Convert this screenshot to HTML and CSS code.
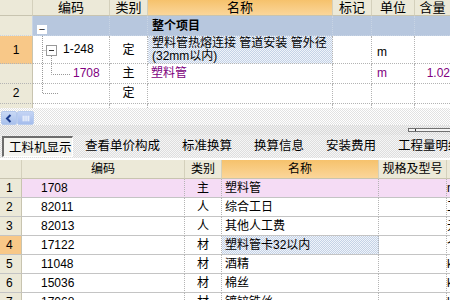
FILE: index.html
```html
<!DOCTYPE html>
<html>
<head>
<meta charset="utf-8">
<link rel="stylesheet" href="styles.css">
</head>
<body>
<div class="page">
  <div class="grid-top">
    <div class="trow thead">
      <div class="c rn"></div>
      <div class="c ctr">编码</div>
      <div class="c ctr">类别</div>
      <div class="c ctr orange">名称</div>
      <div class="c ctr">标记</div>
      <div class="c ctr">单位</div>
      <div class="c ctr">含量</div>
    </div>
    <div class="trow proj">
      <div class="c rn"></div>
      <div class="c code"><span class="rootbox">−</span></div>
      <div class="c"></div>
      <div class="c bold">整个项目</div>
      <div class="c"></div>
      <div class="c"></div>
      <div class="c"></div>
    </div>
    <div class="trow r1">
      <div class="c rn sel">1</div>
      <div class="c code">
        <svg class="tree" width="77" height="28" viewBox="0 0 77 28"><path d="M9.5 0V28M9.5 14.5H13M18.5 20V28" stroke="#999" stroke-dasharray="1 1" fill="none"/><rect x="13.5" y="9.5" width="10" height="10" fill="#fff" stroke="#999"/><path d="M16 14.5H21" stroke="#333"/></svg>
        <span class="codetxt">1-248</span>
      </div>
      <div class="c ctr">定</div>
      <div class="c name2 dither-blue">塑料管热熔连接 管道安装 管外径<br>(32mm以内)</div>
      <div class="c"></div>
      <div class="c unit low">m</div>
      <div class="c"></div>
    </div>
    <div class="trow r2">
      <div class="c rn"></div>
      <div class="c code">
        <svg class="tree" width="77" height="20" viewBox="0 0 77 20"><path d="M9.5 0V20M18.5 0V10.5H37" stroke="#999" stroke-dasharray="1 1" fill="none"/></svg>
        <span class="codetxt purple sub">1708</span>
      </div>
      <div class="c ctr">主</div>
      <div class="c purple">塑料管</div>
      <div class="c"></div>
      <div class="c unit purple">m</div>
      <div class="c num purple">1.02</div>
    </div>
    <div class="trow r2">
      <div class="c rn">2</div>
      <div class="c code">
        <svg class="tree" width="77" height="20" viewBox="0 0 77 20"><path d="M9.5 0V9.5H25" stroke="#999" stroke-dasharray="1 1" fill="none"/></svg>
      </div>
      <div class="c ctr">定</div>
      <div class="c"></div>
      <div class="c"></div>
      <div class="c"></div>
      <div class="c"></div>
    </div>
    <div class="trow rcut">
      <div class="c rn"></div>
      <div class="c"></div>
      <div class="c ctr cuttext">定</div>
      <div class="c"></div>
      <div class="c"></div>
      <div class="c"></div>
      <div class="c"></div>
    </div>
  </div>
  <div class="hscroll">
    <div class="sbtn">
      <svg width="14" height="13" viewBox="0 0 14 13"><path d="M8.5 3L5 6.5L8.5 10" stroke="#1c3c8c" stroke-width="2" fill="none"/></svg>
    </div>
    <div class="sthumb">
      <svg width="16" height="13" viewBox="0 0 16 13"><path d="M5.5 3.5V9.5M7.5 3.5V9.5M9.5 3.5V9.5M11.5 3.5V9.5" stroke="#fff" stroke-width="1"/></svg>
    </div>
    <div class="strack"></div>
  </div>
  <div class="midband">
    <div class="minibox"><span class="minidot"></span></div>
  </div>
  <div class="tabs">
    <div class="tab active">工料机显示</div>
    <div class="sep"></div>
    <div class="tab">查看单价构成</div>
    <div class="sep"></div>
    <div class="tab">标准换算</div>
    <div class="sep"></div>
    <div class="tab">换算信息</div>
    <div class="sep"></div>
    <div class="tab">安装费用</div>
    <div class="sep"></div>
    <div class="tab">工程量明细</div>
  </div>
  <div class="grid-bot">
    <div class="brow bhead">
      <div class="c brn"></div>
      <div class="c ctr">编码</div>
      <div class="c ctr">类别</div>
      <div class="c ctr orange">名称</div>
      <div class="c ctr">规格及型号</div>
      <div class="c"></div>
    </div>
    <div class="brow pink">
      <div class="c brn">1</div>
      <div class="c bcode">1708</div>
      <div class="c ctr">主</div>
      <div class="c bname">塑料管</div>
      <div class="c"></div>
      <div class="c last">m</div>
    </div>
    <div class="brow">
      <div class="c brn">2</div>
      <div class="c bcode">82011</div>
      <div class="c ctr">人</div>
      <div class="c bname">综合工日</div>
      <div class="c"></div>
      <div class="c last">工</div>
    </div>
    <div class="brow">
      <div class="c brn">3</div>
      <div class="c bcode">82013</div>
      <div class="c ctr">人</div>
      <div class="c bname">其他人工费</div>
      <div class="c"></div>
      <div class="c last">元</div>
    </div>
    <div class="brow">
      <div class="c brn sel">4</div>
      <div class="c bcode">17122</div>
      <div class="c ctr">材</div>
      <div class="c bname dither-blue">塑料管卡32以内</div>
      <div class="c"></div>
      <div class="c last">个</div>
    </div>
    <div class="brow">
      <div class="c brn">5</div>
      <div class="c bcode">11048</div>
      <div class="c ctr">材</div>
      <div class="c bname">酒精</div>
      <div class="c"></div>
      <div class="c last">k</div>
    </div>
    <div class="brow">
      <div class="c brn">6</div>
      <div class="c bcode">15036</div>
      <div class="c ctr">材</div>
      <div class="c bname">棉丝</div>
      <div class="c"></div>
      <div class="c last">k</div>
    </div>
    <div class="brow">
      <div class="c brn">7</div>
      <div class="c bcode">17068</div>
      <div class="c ctr">材</div>
      <div class="c bname">镀锌铁丝</div>
      <div class="c"></div>
      <div class="c last">k</div>
    </div>
  </div>
</div>
</body>
</html>
```

FILE: styles.css
```css
* { box-sizing: border-box; }
html, body { margin: 0; padding: 0; }
body {
  width: 450px;
  height: 300px;
  overflow: hidden;
  background: #fff;
  font-family: "Liberation Sans", "Noto Sans CJK SC", sans-serif;
  font-size: 12px;
  color: #000;
}
.page { width: 450px; height: 300px; overflow: hidden; display: flex; flex-direction: column; }

.c {
  position: relative;
  border-right: 1px dotted #b4b4b4;
  border-bottom: 1px dotted #b4b4b4;
  white-space: nowrap;
  overflow: hidden;
  line-height: 19px;
  padding: 0 3px;
}
.ctr { text-align: center; }
.bold { font-weight: bold; }
.purple { color: #800080; }

/* top grid */
.grid-top { flex: none; height: 108px; overflow: hidden; }
.trow {
  display: grid;
  grid-template-columns: 33px 77px 38px 185px 39px 43px 35px;
  height: 20px;
}
.trow .c:last-child { border-right: none; }
.thead { height: 16px; background: #ece9d8; }
.thead .c { line-height: 15px; font-size: 13px; border-right: 1px solid #d4d0bc; border-bottom: 1px solid #c8c4b0; }
.orange { background: linear-gradient(#f6c26c, #fbd69a); }
.rn { background: #ece9d8; text-align: center; border-right: 1px solid #c8c4b0; }
.rn.sel, .brn.sel { background: #f8c888; }
.proj { background: #b7c7de; }
.proj .c { border-color: #c8d4e4; }
.proj .rn { background: #ece9d8; }
.proj .bold { padding-left: 4px; line-height: 20px; }
.rootbox {
  position: absolute;
  left: 4px; top: 9px;
  width: 10px; height: 9px;
  background: #fff;
  line-height: 8px;
  font-size: 11px;
  text-align: center;
  color: #222;
}
.r1 { height: 28px; }
.r1 .rn { line-height: 28px; }
.r2 .rn { line-height: 19px; }
.code { padding: 0; }
.tree { position: absolute; left: 0; top: 0; }
.codetxt { position: absolute; left: 30px; top: 4px; line-height: 19px; }
.codetxt.sub { left: 40px; top: 0; }
.r1 .ctr { line-height: 28px; }
.name2 { line-height: 13px; padding: 1px 3px 0 4px; }
.dither-blue {
  background-color: #dbe3ef;
  background-image: repeating-conic-gradient(#c4d2e6 0 25%, #f0f4fa 0 50%);
  background-size: 2px 2px;
}
.unit { padding-left: 5px; }
.unit.low { line-height: 32px; }
.num { text-align: right; padding-right: 0; }
.rcut { height: 4px; overflow: hidden; }
.rcut .c { border-bottom: none; }
.cuttext { line-height: 22px; }

/* scrollbar */
.hscroll {
  flex: none;
  height: 17px;
  padding-top: 3px;
  display: flex;
  background-image: repeating-conic-gradient(#ffffff 0 25%, #e2e2e2 0 50%);
  background-size: 2px 2px;
}
.sbtn {
  width: 16px; height: 14px;
  margin-left: 1px;
  background: linear-gradient(#c8d8f4, #a8c0ec);
  border: 1px solid #b4c8ec;
  border-radius: 2px;
  display: flex; align-items: center; justify-content: center;
}
.sthumb {
  width: 17px; height: 14px;
  background: linear-gradient(#c4d4f4, #a4bcec);
  border: 1px solid #b8ccee;
  border-radius: 2px;
  display: flex; align-items: center; justify-content: center;
}
.strack { flex: 1; }

.midband {
  flex: none;
  height: 10px;
  display: flex;
  justify-content: flex-end;
  align-items: flex-start;
  padding-top: 3px;
  background-image: repeating-conic-gradient(#f2f2f2 0 25%, #d8d8d8 0 50%);
  background-size: 2px 2px;
}
.minibox {
  width: 42px; height: 4px;
  border: 1px solid #707070;
  border-right: none;
  position: relative;
  background: #f4f4f4;
}
.minidot { position: absolute; left: 6px; top: 0; width: 1px; height: 2px; background: #333; }

/* tabs */
.tabs {
  flex: none;
  height: 23px;
  display: flex;
  align-items: center;
  padding-left: 2px;
  background-image: repeating-conic-gradient(#f6f6f6 0 25%, #dedede 0 50%);
  background-size: 2px 2px;
  white-space: nowrap;
}
.tab {
  font-size: 12.5px;
  line-height: 20px;
  height: 21px;
  padding: 0 10px;
}
.tab.active {
  padding: 0 5px;
  background: #f4f4f0;
  border-top: 2px solid #6c6c6c;
  border-left: 2px solid #6c6c6c;
  border-right: 1px solid #ffffff;
  border-bottom: 1px solid #ffffff;
  width: 71px;
}
.sep { width: 1px; height: 20px; background: #a8a8a8; box-shadow: 1px 0 0 #fff; margin: 0 1px; }

/* bottom grid */
.grid-bot { flex: none; margin-top: 2px; }
.brow {
  display: grid;
  grid-template-columns: 22px 163px 37px 157px 68px 3px;
  height: 19px;
}
.brow .c { border-bottom: 1px solid #c4c4c4; line-height: 18px; }
.bhead { height: 19px; background: #ece9d8; }
.bhead .c { border-right: 1px solid #d4d0bc; border-bottom: 1px solid #c8c4b0; }
.brn { background: #ece9d8; padding-left: 6px; border-right: 1px solid #c8c4b0; }
.bcode { padding-left: 19px; }
.bname { padding-left: 3px; }
.pink .c { background: #f5dcf5; }
.pink .brn { background: #ece9d8; }
.last { padding: 0; border-right: none; }
```
